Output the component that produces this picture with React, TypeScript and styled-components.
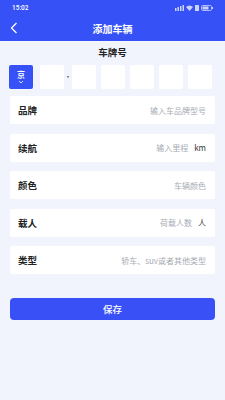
import React from 'react';
import styled, { createGlobalStyle } from 'styled-components';

const GlobalStyle = createGlobalStyle`
  body {
    margin: 0;
    background: #f1f4fd;
    font-family: 'Noto Sans CJK SC', 'Noto Sans', sans-serif;
  }
`;

const Page = styled.div`
  width: 225px;
  height: 400px;
  background: #f1f4fd;
`;

const Header = styled.header`
  background: #3651f5;
  height: 41px;
  display: flex;
  flex-direction: column;
  color: #fff;
`;

const StatusBar = styled.div`
  height: 15px;
  display: flex;
  align-items: center;
  justify-content: space-between;
  padding: 0 12px;
  font-family: 'Roboto', sans-serif;
  font-size: 6.5px;
  font-weight: 500;
`;

const StatusIcons = styled.div`
  display: flex;
  align-items: center;
  gap: 2px;
  opacity: 0.75;
`;

const NavBar = styled.div`
  flex: 1;
  display: flex;
  align-items: center;
  justify-content: center;
  position: relative;
`;

const Back = styled.svg`
  position: absolute;
  left: 10px;
  top: 50%;
  transform: translateY(-50%);
`;

const Title = styled.h1`
  margin: 0;
  font-size: 10px;
  font-weight: 700;
`;

const Section = styled.section`
  padding: 0 10px;
  display: flex;
  flex-direction: column;
`;

const PlateLabel = styled.div`
  text-align: center;
  font-size: 9.5px;
  font-weight: 700;
  color: #222;
  margin-top: 5px;
  height: 13px;
  line-height: 13px;
`;

const PlateRow = styled.div`
  display: flex;
  align-items: center;
  margin: 6px 0 0 -1px;
  height: 24px;
`;

const PlateBox = styled.div<{ $active?: boolean }>`
  width: 24px;
  height: 24px;
  border-radius: 2px;
  background: ${p => (p.$active ? '#3651f5' : '#ffffff')};
  color: #fff;
  display: flex;
  flex-direction: column;
  align-items: center;
  justify-content: center;
  font-size: 8px;
  font-weight: 700;
  line-height: 10px;
  flex-shrink: 0;
`;

const Dot = styled.div`
  width: 8px;
  text-align: center;
  font-size: 8px;
  color: #555;
  line-height: 8px;
`;

const Gap = styled.div<{ $w?: number }>`
  width: ${p => p.$w ?? 5}px;
  flex-shrink: 0;
`;

const Rows = styled.div`
  display: flex;
  flex-direction: column;
  gap: 9.5px;
  margin-top: 7px;
`;

const Row = styled.div`
  height: 28px;
  background: #fff;
  border-radius: 2px;
  display: flex;
  align-items: center;
  justify-content: space-between;
  padding: 0 9px 0 8px;
`;

const Label = styled.span`
  font-size: 9.5px;
  font-weight: 700;
  color: #222;
`;

const Value = styled.span`
  display: flex;
  align-items: center;
  gap: 6px;
`;

const Placeholder = styled.span`
  font-size: 8px;
  color: #a8acb4;
`;

const Unit = styled.span`
  font-size: 8px;
  color: #333;
`;

const SaveButton = styled.button`
  margin-top: 24px;
  height: 22px;
  padding: 0;
  border: none;
  border-radius: 4px;
  background: #3a50f7;
  color: #fff;
  font-family: inherit;
  font-size: 9.5px;
  font-weight: 500;
`;

const fields = [
  { label: '品牌', placeholder: '输入车品牌型号' },
  { label: '续航', placeholder: '输入里程', unit: 'km' },
  { label: '颜色', placeholder: '车辆颜色' },
  { label: '载人', placeholder: '荷载人数', unit: '人' },
  { label: '类型', placeholder: '轿车、suv或者其他类型' },
];

const App = () => {
  return (
    <Page>
      <GlobalStyle />
      <Header>
        <StatusBar>
          <span>15:02</span>
          <StatusIcons>
            <svg width="9" height="6" viewBox="0 0 9 6">
              <rect x="0" y="3" width="1.5" height="3" fill="#fff" />
              <rect x="2.5" y="2" width="1.5" height="4" fill="#fff" />
              <rect x="5" y="1" width="1.5" height="5" fill="#fff" />
              <rect x="7.5" y="0" width="1.5" height="6" fill="#fff" />
            </svg>
            <svg width="7" height="6" viewBox="0 0 7 6">
              <path d="M0 2 Q3.5 -1 7 2 L3.5 6 Z" fill="#fff" />
            </svg>
            <svg width="4" height="6" viewBox="0 0 4 6">
              <rect x="0" y="0" width="4" height="6" rx="0.5" fill="#fff" />
            </svg>
            <svg width="12" height="6" viewBox="0 0 12 6">
              <rect x="0.5" y="0.5" width="10" height="5" rx="1.2" fill="none" stroke="#fff" strokeWidth="0.8" />
              <rect x="1.5" y="1.5" width="6" height="3" fill="#fff" />
              <rect x="11" y="2" width="1" height="2" fill="#fff" />
            </svg>
          </StatusIcons>
        </StatusBar>
        <NavBar>
          <Back width="8" height="12" viewBox="0 0 8 12">
            <path d="M6.5 1 L1.5 6 L6.5 11" fill="none" stroke="#fff" strokeWidth="1.3" />
          </Back>
          <Title>添加车辆</Title>
        </NavBar>
      </Header>

      <Section>
        <PlateLabel>车牌号</PlateLabel>
        <PlateRow>
          <PlateBox $active>
            <span>京</span>
            <svg width="6" height="4" viewBox="0 0 6 4">
              <path d="M1 1 L3 3 L5 1" fill="none" stroke="#fff" strokeWidth="0.8" />
            </svg>
          </PlateBox>
          <Gap $w={7} />
          <PlateBox />
          <Dot>·</Dot>
          <PlateBox />
          <Gap />
          <PlateBox />
          <Gap />
          <PlateBox />
          <Gap />
          <PlateBox />
          <Gap />
          <PlateBox />
        </PlateRow>

        <Rows>
          {fields.map(f => (
            <Row key={f.label}>
              <Label>{f.label}</Label>
              <Value>
                <Placeholder>{f.placeholder}</Placeholder>
                {f.unit && <Unit>{f.unit}</Unit>}
              </Value>
            </Row>
          ))}
        </Rows>

        <SaveButton>保存</SaveButton>
      </Section>
    </Page>
  );
};

export default App;
